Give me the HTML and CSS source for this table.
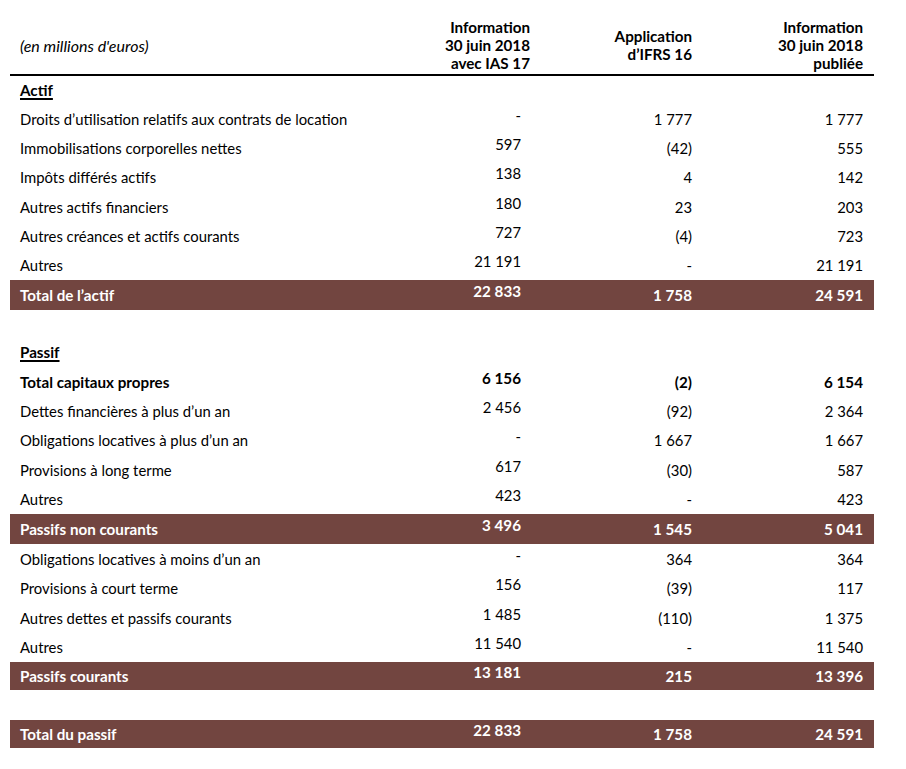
FILE: index.html
```html
<!DOCTYPE html>
<html lang="fr">
<head>
<meta charset="utf-8">
<link rel="stylesheet" href="styles.css">
</head>
<body>
<div class="sheet">
  <div class="row head">
    <div class="lab unit">(en millions d'euros)</div>
    <div class="h">Information<br>30 juin 2018<br>avec IAS 17</div>
    <div class="h">Application<br>d’IFRS 16</div>
    <div class="h">Information<br>30 juin 2018<br>publiée</div>
  </div>
  <div class="rule"></div>

  <div class="row sec first"><div class="lab"><span class="u">Actif</span></div></div>
  <div class="row r1"><div class="lab">Droits d’utilisation relatifs aux contrats de location</div><div class="c1">-</div><div class="c">1 777</div><div class="c">1 777</div></div>
  <div class="row r1"><div class="lab">Immobilisations corporelles nettes</div><div class="c1">597</div><div class="c">(42)</div><div class="c">555</div></div>
  <div class="row r1"><div class="lab">Impôts différés actifs</div><div class="c1">138</div><div class="c">4</div><div class="c">142</div></div>
  <div class="row r1"><div class="lab">Autres actifs financiers</div><div class="c1">180</div><div class="c">23</div><div class="c">203</div></div>
  <div class="row r1"><div class="lab">Autres créances et actifs courants</div><div class="c1">727</div><div class="c">(4)</div><div class="c">723</div></div>
  <div class="row r1"><div class="lab">Autres</div><div class="c1">21 191</div><div class="c">-</div><div class="c">21 191</div></div>
  <div class="row bar tall"><div class="lab">Total de l’actif</div><div class="c1">22 833</div><div class="c">1 758</div><div class="c">24 591</div></div>

  <div class="row sec second"><div class="lab"><span class="u">Passif</span></div></div>
  <div class="row r2 bold"><div class="lab">Total capitaux propres</div><div class="c1">6 156</div><div class="c">(2)</div><div class="c">6 154</div></div>
  <div class="row r2"><div class="lab">Dettes financières à plus d’un an</div><div class="c1">2 456</div><div class="c">(92)</div><div class="c">2 364</div></div>
  <div class="row r2"><div class="lab">Obligations locatives à plus d’un an</div><div class="c1">-</div><div class="c">1 667</div><div class="c">1 667</div></div>
  <div class="row r2"><div class="lab">Provisions à long terme</div><div class="c1">617</div><div class="c">(30)</div><div class="c">587</div></div>
  <div class="row r2"><div class="lab">Autres</div><div class="c1">423</div><div class="c">-</div><div class="c">423</div></div>
  <div class="row bar tall"><div class="lab">Passifs non courants</div><div class="c1">3 496</div><div class="c">1 545</div><div class="c">5 041</div></div>
  <div class="row r3"><div class="lab">Obligations locatives à moins d’un an</div><div class="c1">-</div><div class="c">364</div><div class="c">364</div></div>
  <div class="row r3"><div class="lab">Provisions à court terme</div><div class="c1">156</div><div class="c">(39)</div><div class="c">117</div></div>
  <div class="row r3"><div class="lab">Autres dettes et passifs courants</div><div class="c1">1 485</div><div class="c">(110)</div><div class="c">1 375</div></div>
  <div class="row r3"><div class="lab">Autres</div><div class="c1">11 540</div><div class="c">-</div><div class="c">11 540</div></div>
  <div class="row bar short"><div class="lab">Passifs courants</div><div class="c1">13 181</div><div class="c">215</div><div class="c">13 396</div></div>

  <div class="row bar short final"><div class="lab">Total du passif</div><div class="c1">22 833</div><div class="c">1 758</div><div class="c">24 591</div></div>
</div>
</body>
</html>
```
FILE: styles.css
```css
html, body {
  margin: 0;
  padding: 0;
  background: #ffffff;
}
body {
  font-family: Lato, "Open Sans", "Liberation Sans", sans-serif;
  font-size: 14.85px;
  color: #000;
}
.sheet {
  margin-left: 10px;
  width: 864px;
  display: flex;
  flex-direction: column;
}
.row {
  display: grid;
  grid-template-columns: 350px 170px 162px 171px;
  padding-right: 11px;
  align-items: center;
}
.lab {
  padding-left: 10px;
  white-space: nowrap;
}
.c, .c1, .h {
  text-align: right;
  white-space: nowrap;
}
.c1 {
  padding-right: 9px;
  padding-bottom: 8px;
}
.head {
  padding-top: 18px;
  padding-bottom: 2px;
  line-height: 18px;
}
.h {
  font-weight: 700;
  font-size: 15.2px;
}
.unit {
  font-style: italic;
  font-size: 16px;
  padding-top: 2px;
}
.rule {
  height: 2px;
  background: #000;
}
.sec {
  font-weight: 700;
  font-size: 15.2px;
}
.sec.first { height: 28px; }
.sec.second { height: 29px; margin-top: 28px; }
.u {
  text-decoration: underline;
  text-decoration-thickness: 2px;
  text-underline-offset: 2px;
}
.r1 { height: 29.33px; }
.r2 { height: 29.4px; }
.r3 { height: 29.5px; }
.bold {
  font-weight: 700;
  font-size: 15.2px;
}
.bar {
  background: #724540;
  color: #fff;
  font-weight: 700;
  font-size: 15.2px;
}
.tall { height: 30px; }
.short { height: 28px; }
.final { margin-top: 30px; }
```
